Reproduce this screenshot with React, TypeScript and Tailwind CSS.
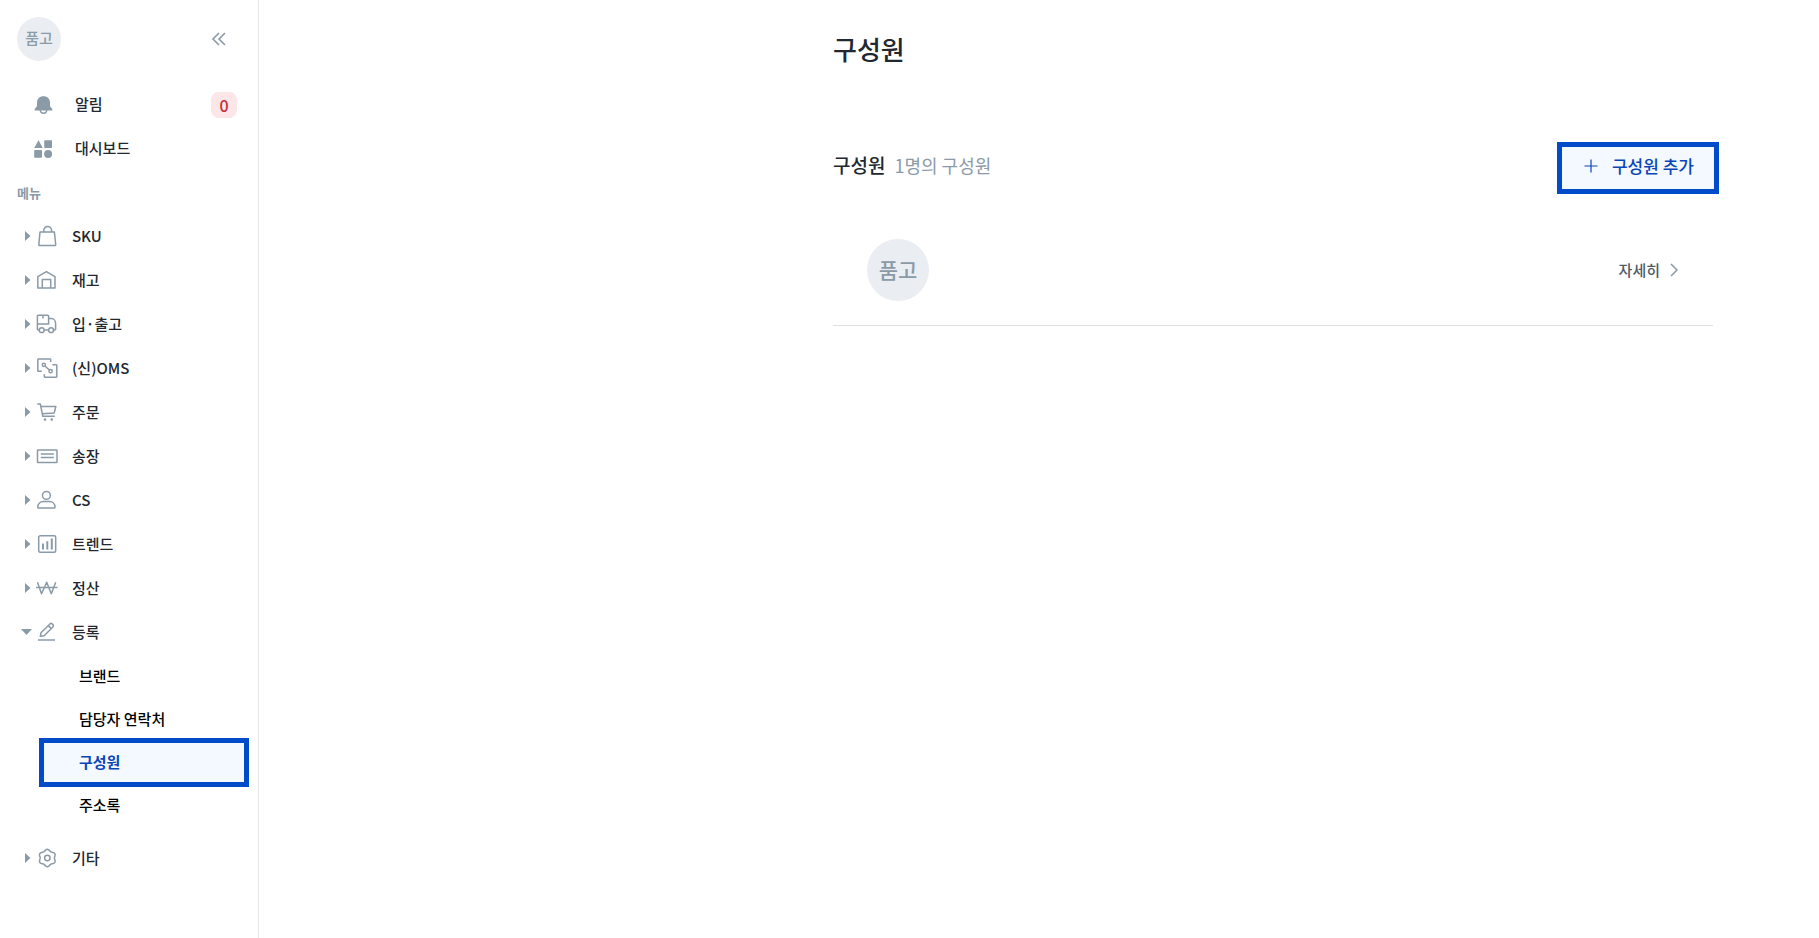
import React, { useState } from 'react';

interface MenuItem {
  id: string;
  label: string;
  icon: React.ReactNode;
  children?: string[];
}

const BagIcon = (
  <>
    <path d="M5 8h14.4l1.3 12.6a.8.8 0 0 1-.8.9H4.6a.8.8 0 0 1-.8-.9L5 8z" />
    <path d="M8.8 8V6.4a3.9 3.9 0 0 1 7.8 0V8" />
  </>
);

const WarehouseIcon = (
  <>
    <path d="M2.8 20V8.7l8.6-5 8.6 5V20z" />
    <path d="M7.3 20v-8.4h8.4V20" />
  </>
);

const TruckIcon = (
  <>
    <path d="M4.2 18H3.1a.7.7 0 0 1-.7-.7V4a.7.7 0 0 1 .7-.7h9.8a.7.7 0 0 1 .7.7v8H2.4M8 3.3v3.2" />
    <path d="M13.6 6.6h2.8c2.6 0 4.2 2.4 4.2 5v5.7a.7.7 0 0 1-.7.7h-1.4M9.2 18h4.4" />
    <circle cx="6.7" cy="18.2" r="2.4" />
    <circle cx="16.1" cy="18.2" r="2.4" />
  </>
);

const OmsIcon = (
  <>
    <path d="M15.7 6V3.7a.6.6 0 0 0-.6-.6H3.4a.6.6 0 0 0-.6.6v11a.6.6 0 0 0 .6.6h3.4" />
    <path d="M17.4 8.8h3.8a.6.6 0 0 1 .6.6v11.2a.6.6 0 0 1-.6.6H9.9a.6.6 0 0 1-.6-.6v-2.3" />
    <circle cx="8.8" cy="8.8" r="1.6" />
    <circle cx="15.6" cy="15.2" r="1.6" />
    <path d="M10 10l4.4 4" />
  </>
);

const CartIcon = (
  <>
    <path d="M2.3 3.9h3l2.5 12.4h12" />
    <path d="M5.8 6.5h15l-1.6 6.6-12 .6" />
    <circle cx="10" cy="19.5" r=".6" fill="currentColor" />
    <circle cx="16.8" cy="19.5" r=".6" fill="currentColor" />
  </>
);

const InvoiceIcon = (
  <>
    <rect x="2.5" y="6" width="19.5" height="12.5" rx=".6" />
    <path d="M5.8 10h13M5.8 13.5h13" />
  </>
);

const PersonIcon = (
  <>
    <circle cx="11.4" cy="7.4" r="3.9" />
    <path d="M2.8 19.2c0-3.7 2.6-5.6 5.6-5.6h6c3 0 5.6 1.9 5.6 5.6a.8.8 0 0 1-.8.8H3.6a.8.8 0 0 1-.8-.8z" />
  </>
);

const ChartIcon = (
  <>
    <rect x="3.7" y="3.8" width="17" height="16.5" rx="1.5" />
    <path d="M8 11.5v6M12.3 9.3v8.2M16.8 6.5v11" strokeWidth="2" />
  </>
);

const WonIcon = <path d="M2.5 6.3l4 11.4 5.2-11.4 4.6 11.4 4.4-11.4M1 11.6h21.5" />;

const PencilIcon = (
  <>
    <path d="M5.3 16.3l.7-3.6 8.9-8.7a1.7 1.7 0 0 1 2.4 0l.6.6a1.7 1.7 0 0 1 0 2.4l-8.8 8.7-3.8.6z" />
    <path d="M13.3 5.6l3 3" />
    <path d="M3 20h17" />
  </>
);

// Six rounded teeth, one of them pointing straight up
const gearPoints = Array.from({ length: 72 }, (_, i) => {
  const angle = (i * Math.PI) / 36;
  const radius = 7.9 + 0.8 * Math.cos(6 * angle);
  return `${(12.3 + radius * Math.sin(angle)).toFixed(2)},${(12 - radius * Math.cos(angle)).toFixed(2)}`;
}).join(' ');

const GearIcon = (
  <>
    <polygon points={gearPoints} />
    <circle cx="12.3" cy="12" r="2.7" />
  </>
);

const menuItems: MenuItem[] = [
  { id: 'sku', label: 'SKU', icon: BagIcon },
  { id: 'stock', label: '재고', icon: WarehouseIcon },
  { id: 'inout', label: '입·출고', icon: TruckIcon },
  { id: 'oms', label: '(신)OMS', icon: OmsIcon },
  { id: 'order', label: '주문', icon: CartIcon },
  { id: 'invoice', label: '송장', icon: InvoiceIcon },
  { id: 'cs', label: 'CS', icon: PersonIcon },
  { id: 'trend', label: '트렌드', icon: ChartIcon },
  { id: 'settlement', label: '정산', icon: WonIcon },
  {
    id: 'register',
    label: '등록',
    icon: PencilIcon,
    children: ['브랜드', '담당자 연락처', '구성원', '주소록'],
  },
  { id: 'etc', label: '기타', icon: GearIcon },
];

const Caret = ({ open }: { open: boolean }) => (
  <svg className="h-3 w-3 shrink-0 fill-[#8b9aa7]" viewBox="0 0 12 12">
    {open ? <path d="M0 3h11L5.5 9z" /> : <path d="M4 1v10l5.5-5z" />}
  </svg>
);

const Sidebar = () => {
  const [openId, setOpenId] = useState('register');
  const [activePage, setActivePage] = useState('구성원');

  return (
    <aside className="w-[259px] shrink-0 border-r border-[#e6e7ea] pt-[17px] text-[15px] font-medium text-[#212830]">
      <div className="flex h-11 items-center justify-between pl-[17px] pr-[31px]">
        <div className="flex h-11 w-11 items-center justify-center rounded-full bg-[#eaedf2] pb-px text-[#8b9aa7]">
          품고
        </div>
        <button type="button" aria-label="사이드바 접기" className="text-[#8b9aa7]">
          <svg className="h-4 w-4" viewBox="0 0 16 16" fill="none" stroke="currentColor" strokeWidth="1.6">
            <path d="M8 2L2 8l6 6M14 2L8 8l6 6" />
          </svg>
        </button>
      </div>

      <nav className="pt-[22px]">
        <a href="#notice" className="flex h-11 items-center pl-8 pr-[21px]">
          <svg className="mr-[19px] h-6 w-6 fill-[#8b9aa7]" viewBox="0 0 24 24">
            <path d="M11.5 3.3c-3.9 0-6.5 2.7-6.5 6.2v3.8L2.7 16v1.5h17.6V16L18 13.3V9.5c0-3.5-2.6-6.2-6.5-6.2z" />
            <path d="M8.2 17c.2 2.1 1.5 3.3 3.3 3.3s3.1-1.2 3.3-3.3" fill="none" stroke="#8b9aa7" strokeWidth="1.4" />
          </svg>
          <span className="flex-1 pb-[2px]">알림</span>
          <span className="flex h-[26px] w-[26px] items-center justify-center rounded-lg bg-[#fce6e7] text-[16px] text-[#c22f3a]">
            0
          </span>
        </a>
        <a href="#dashboard" className="flex h-11 items-center pl-8 pr-[21px]">
          <svg className="mr-[19px] h-6 w-6 fill-[#8b9aa7]" viewBox="0 0 24 24">
            <path d="M6.5 3.2l4.3 7.8H2.2z" />
            <rect x="12.2" y="3.2" width="7.8" height="7.8" rx=".8" />
            <rect x="2.2" y="13" width="7.8" height="7.8" rx=".8" />
            <circle cx="16.1" cy="16.9" r="4" />
          </svg>
          <span className="pb-[2px]">대시보드</span>
        </a>

        <p className="flex h-[43px] items-center pl-[17px] text-[13px] font-bold text-[#8b9aa7]">메뉴</p>

        <ul>
          {menuItems.map((item) => {
            const open = item.id === openId;
            return (
              <li key={item.id}>
                <button
                  type="button"
                  aria-expanded={open}
                  onClick={() => setOpenId(open ? '' : item.id)}
                  className="flex h-11 w-full items-center pl-[21px] text-left"
                >
                  <Caret open={open} />
                  <svg
                    className="ml-[2px] mr-[13px] h-6 w-6 shrink-0 text-[#8b9aa7]"
                    viewBox="0 0 24 24"
                    fill="none"
                    stroke="currentColor"
                    strokeWidth="1.5"
                    strokeLinejoin="round"
                  >
                    {item.icon}
                  </svg>
                  <span>{item.label}</span>
                </button>
                {open && item.children && (
                  <ul className="mb-[9px] pt-px text-black">
                    {item.children.map((child) => (
                      <li key={child} className="flex h-[43px] items-center pl-[39px] pr-[9px]">
                        <a
                          href="#page"
                          onClick={() => setActivePage(child)}
                          className={
                            child === activePage
                              ? '-my-[3px] flex h-[49px] w-full items-center border-[5px] border-[#004bc9] bg-[#f4f8ff] pl-[35px] font-bold text-[#0a45b8]'
                              : 'flex h-full w-full items-center pl-10'
                          }
                        >
                          {child}
                        </a>
                      </li>
                    ))}
                  </ul>
                )}
              </li>
            );
          })}
        </ul>
      </nav>
    </aside>
  );
};

const Members = () => (
  <main className="flex-1 pr-[106px] pt-[29px]">
    <div className="ml-auto max-w-[880px]">
      <h1 className="text-[26px] font-medium leading-10 text-[#212830]">구성원</h1>

      <section className="mt-[73px]">
        <div className="-mr-[6px] flex items-center justify-between">
          <div className="flex items-center gap-[9px] pb-[5px]">
            <h2 className="text-[19px] font-medium text-[#212830]">구성원</h2>
            <span className="text-[18px] text-[#8b9aa7]">1명의 구성원</span>
          </div>
          <button
            type="button"
            className="flex h-[52px] items-center gap-[13px] border-[5px] border-[#004bc9] bg-[#f4f8ff] pb-1 pl-[21px] pr-5 text-[17px] font-medium text-[#0a45b8]"
          >
            <svg className="h-4 w-4" viewBox="0 0 16 16" fill="none" stroke="currentColor" strokeWidth="1.2">
              <path d="M8 1.5v13M1.5 8h13" />
            </svg>
            구성원 추가
          </button>
        </div>

        <ul className="mt-[45px]">
          <li className="flex items-start justify-between border-b border-[#dfe0e2] pb-6 pl-[34px] pr-[33px]">
            <div className="flex h-[62px] w-[62px] items-center justify-center rounded-full bg-[#eaedf2] pb-px text-[21px] font-medium text-[#8b9aa7]">
              품고
            </div>
            <a href="#detail" className="flex h-[62px] items-center gap-2 text-[15px] font-medium text-[#4f5b66]">
              자세히
              <svg className="h-4 w-3" viewBox="0 0 12 16" fill="none" stroke="#8b9aa7" strokeWidth="1.5">
                <path d="M3 2l6 6-6 6" />
              </svg>
            </a>
          </li>
        </ul>
      </section>
    </div>
  </main>
);

export default function App() {
  return (
    <div className="flex min-h-screen bg-white font-['Noto_Sans_CJK_KR',sans-serif]">
      <Sidebar />
      <Members />
    </div>
  );
}
